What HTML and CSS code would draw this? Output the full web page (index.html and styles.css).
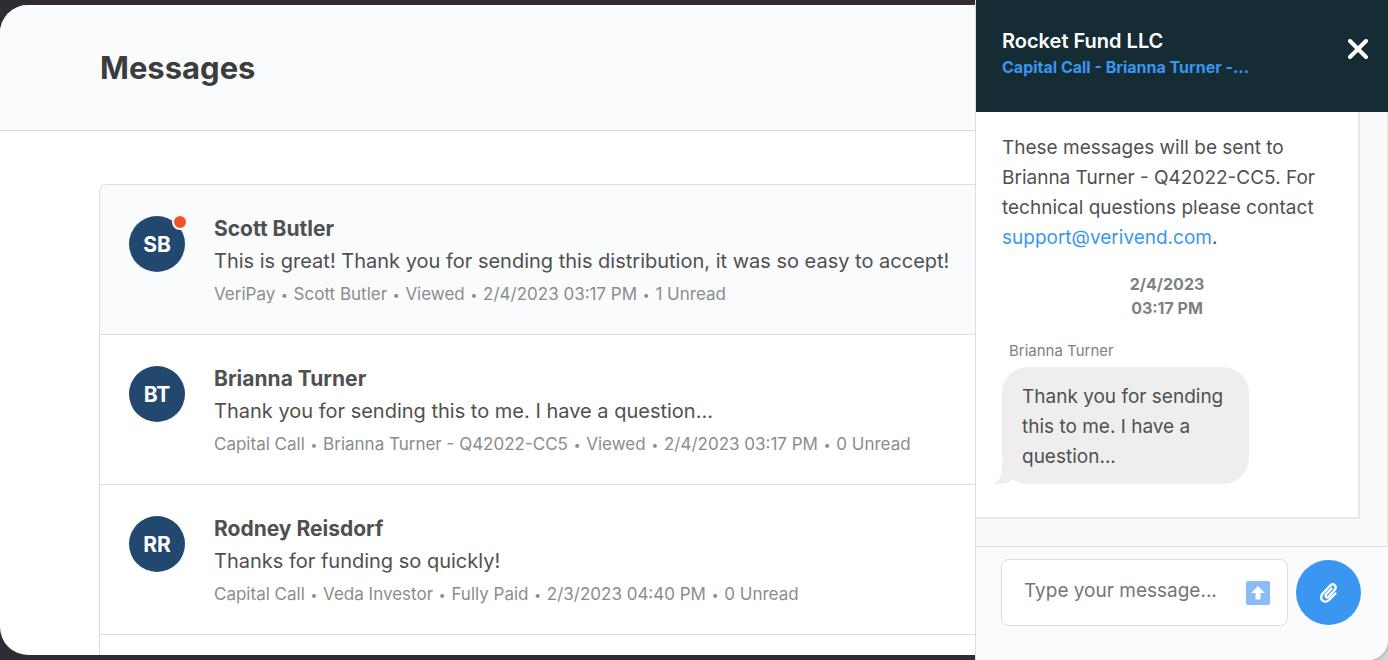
FILE: index.html
```html
<!DOCTYPE html>
<html lang="en">
<head>
  <meta charset="UTF-8"/>
  <meta name="viewport" content="width=device-width, initial-scale=1.0"/>
  <title>Messages</title>
  <link rel="stylesheet" href="styles.css">
</head>
<body>
  <div class="app">

    <main class="page">
      <header class="page-header">
        <h1>Messages</h1>
      </header>

      <ul class="thread-list">
        <li class="thread active">
          <div class="avatar">SB<span class="unread-dot"></span></div>
          <div class="thread-body">
            <h2>Scott Butler</h2>
            <p class="preview">This is great! Thank you for sending this distribution, it was so easy to accept!</p>
            <p class="meta">VeriPay <span>•</span> Scott Butler <span>•</span> Viewed <span>•</span> 2/4/2023 03:17 PM <span>•</span> 1 Unread</p>
          </div>
        </li>
        <li class="thread">
          <div class="avatar">BT</div>
          <div class="thread-body">
            <h2>Brianna Turner</h2>
            <p class="preview">Thank you for sending this to me. I have a question...</p>
            <p class="meta">Capital Call <span>•</span> Brianna Turner - Q42022-CC5 <span>•</span> Viewed <span>•</span> 2/4/2023 03:17 PM <span>•</span> 0 Unread</p>
          </div>
        </li>
        <li class="thread">
          <div class="avatar">RR</div>
          <div class="thread-body">
            <h2>Rodney Reisdorf</h2>
            <p class="preview">Thanks for funding so quickly!</p>
            <p class="meta">Capital Call <span>•</span> Veda Investor <span>•</span> Fully Paid <span>•</span> 2/3/2023 04:40 PM <span>•</span> 0 Unread</p>
          </div>
        </li>
      </ul>
    </main>

    <aside class="chat">
      <div class="chat-panel">
        <header class="chat-header">
          <div class="chat-title">
            <h2>Rocket Fund LLC</h2>
            <a href="#">Capital Call - Brianna Turner -...</a>
          </div>
          <button type="button" class="close-btn" aria-label="Close">
            <svg width="20" height="20" viewBox="0 0 20 20">
              <path d="M2 2L18 18M18 2L2 18" fill="none" stroke="#fff" stroke-width="4" stroke-linecap="round"/>
            </svg>
          </button>
        </header>

        <div class="chat-body">
          <div class="conversation">
            <p class="notice">These messages will be sent to Brianna Turner - Q42022-CC5. For technical questions please contact <a href="mailto:support@verivend.com">support@verivend.com</a>.</p>
            <p class="timestamp">2/4/2023<br>03:17 PM</p>
            <p class="sender">Brianna Turner</p>
            <div class="bubble">
              Thank you for sending this to me. I have a question...
              <svg class="tail" width="22" height="20" viewBox="0 0 22 20">
                <path d="M9 0V7C9 13 5 18 0 19.500C8 21 16 19 20 15V0Z" fill="#eee"/>
              </svg>
            </div>
          </div>
        </div>

        <form class="composer">
          <div class="message-box">
            <input type="text" id="message" placeholder="Type your message..." aria-label="Message">
            <button type="submit" class="send-btn" aria-label="Send">
              <svg width="24" height="24" viewBox="0 0 24 24">
                <rect width="24" height="24" rx="2" fill="#88bbf7"/>
                <path d="M12 5L19 12H14.500V18.500H9.500V12H5Z" fill="#fff"/>
              </svg>
            </button>
          </div>
          <button type="button" class="attach-btn" aria-label="Attach file">
            <svg width="20" height="22" viewBox="0 0 20 22">
              <path d="M12.500 6.500L7 12.500C5.500 14.500 8 16.500 9.700 14.700L15.800 7.800C18.300 4.300 14.500 0.500 11.200 3.500L3.700 11.500C-0.500 17 5.500 22.500 10 18L16.500 11.500" fill="none" stroke="#fff" stroke-width="2.400" stroke-linecap="round" stroke-linejoin="round"/>
            </svg>
          </button>
        </form>
      </div>
    </aside>

  </div>
</body>
</html>
```

FILE: styles.css
```css
* {
  box-sizing: border-box;
}

body {
  margin: 0;
  font-family: Inter, "Liberation Sans", sans-serif;
  background: #2f2d33;
  color: #505050;
}

h1, h2, p, ul {
  margin: 0;
  padding: 0;
}

button {
  padding: 0;
  border: none;
  background: none;
  cursor: pointer;
}

svg {
  display: block;
}

.app {
  display: flex;
  height: 100vh;
  overflow: hidden;
}

/* message list */
.page {
  flex: 1;
  min-width: 0;
  margin: 5px 0;
  background: #fff;
  border-radius: 28px 0 0 28px;
  overflow: hidden;
}

.page-header {
  padding: 42px 100px;
  background: #fafbfd;
  border-bottom: 1px solid #dcdcde;
}

.page-header h1 {
  font-size: 31px;
  line-height: 41px;
  font-weight: 700;
  color: #3c3c3c;
}

.thread-list {
  list-style: none;
  margin: 53px 0 0 99px;
  min-height: 100vh;
  border: 1px solid #dcdcde;
  border-right: none;
  border-radius: 8px 0 0 0;
  overflow: hidden;
}

.thread {
  display: flex;
  gap: 29px;
  padding: 28px 0 22px 29px;
  border-bottom: 1px solid #dcdcde;
  white-space: nowrap;
}

.thread.active {
  background: #fafbfd;
}

.avatar {
  position: relative;
  flex: none;
  display: flex;
  align-items: center;
  justify-content: center;
  width: 56px;
  height: 56px;
  margin-top: 3px;
  border-radius: 50%;
  background: #22486f;
  color: #fff;
  font-size: 21px;
  font-weight: 700;
}

.unread-dot {
  position: absolute;
  top: -2px;
  right: -3px;
  width: 16px;
  height: 16px;
  border: 2px solid #fafbfd;
  border-radius: 50%;
  background: #f2522a;
}

.thread h2 {
  font-size: 21px;
  line-height: 32px;
  font-weight: 700;
}

.preview {
  font-size: 20px;
  line-height: 32px;
}

.meta {
  font-size: 17px;
  line-height: 35px;
  color: #8c8c8c;
}

.meta span {
  margin: 0 1px;
  font-size: 12px;
  line-height: 1;
  vertical-align: 1px;
}

/* chat panel */
.chat {
  flex: none;
  width: 413px;
  border-left: 1px solid #dcdcde;
  background: #d4d4d4;
  overflow: hidden;
}

.chat-panel {
  display: flex;
  flex-direction: column;
  height: 100%;
  background: #fafbfd;
  border-radius: 0 0 20px 0;
  box-shadow: 0 0 4px #888;
  overflow: hidden;
}

.chat-header {
  display: flex;
  align-items: flex-start;
  justify-content: space-between;
  padding: 27px 20px 33px 26px;
  background: #152c34;
}

.close-btn {
  margin-top: 12px;
}

.chat-title h2 {
  font-size: 20px;
  line-height: 28px;
  font-weight: 600;
  color: #fff;
}

.chat-title a {
  display: block;
  font-size: 16px;
  line-height: 24px;
  font-weight: 700;
  color: #3996f1;
  text-decoration: none;
}

.chat-body {
  flex: 1;
  min-height: 0;
  padding-right: 27px;
  background: #fafafa;
  border-right: 1px solid #ececec;
}

.conversation {
  padding: 21px 26px 33px;
  background: #fff;
  border-right: 2px solid #e8e8e8;
  border-bottom: 2px solid #e8e8e8;
}

.notice {
  font-size: 19px;
  line-height: 30px;
}

.notice a {
  color: #3996f1;
  text-decoration: none;
}

.timestamp {
  margin-top: 19px;
  text-align: center;
  font-size: 16px;
  line-height: 24px;
  font-weight: 700;
  color: #808080;
}

.sender {
  margin: 20px 0 6px 7px;
  font-size: 15px;
  line-height: 21px;
  color: #808080;
}

.bubble {
  position: relative;
  width: 247px;
  padding: 15px 20px 12px;
  border-radius: 26px;
  background: #eee;
  font-size: 19px;
  line-height: 30px;
}

.tail {
  position: absolute;
  left: -9px;
  bottom: 0;
}

.composer {
  display: flex;
  align-items: center;
  gap: 8px;
  padding: 12px 27px 34px 25px;
  border-top: 1px solid #dcdcde;
  background: #fafbfd;
}

.message-box {
  flex: 1;
  min-width: 0;
  display: flex;
  align-items: center;
  height: 67px;
  padding: 0 17px 0 22px;
  border: 1px solid #dcdcde;
  border-radius: 8px;
  background: #fff;
}

.message-box input {
  flex: 1;
  min-width: 0;
  padding: 0 0 5px;
  border: none;
  outline: none;
  background: none;
  font-family: inherit;
  font-size: 19px;
  color: #505050;
}

.message-box input::placeholder {
  color: #757575;
}

.attach-btn {
  flex: none;
  display: flex;
  align-items: center;
  justify-content: center;
  width: 65px;
  height: 65px;
  border-radius: 50%;
  background: #3996f1;
}
```
